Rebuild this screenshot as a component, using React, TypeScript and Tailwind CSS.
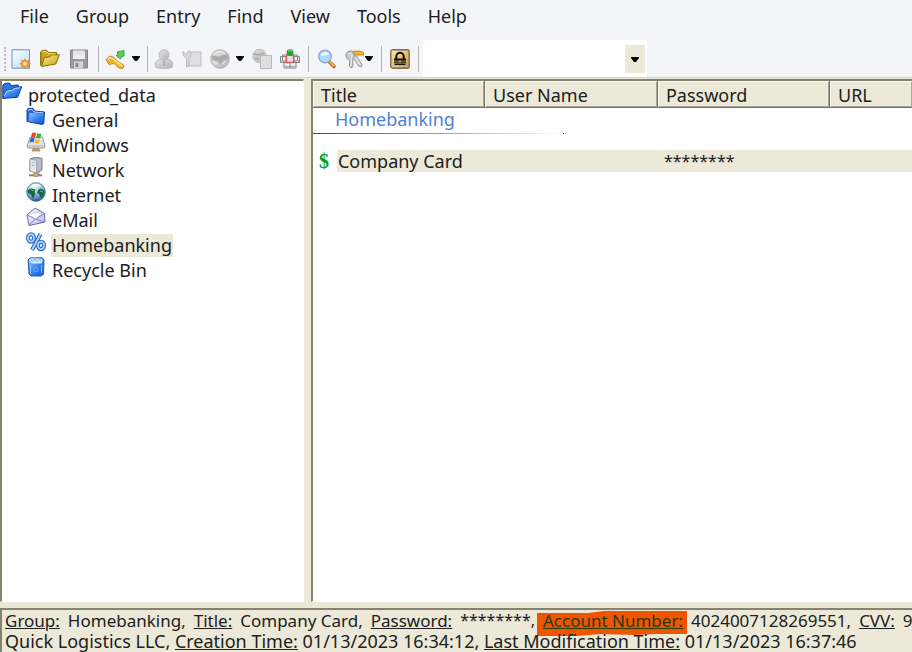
import type { ReactNode } from "react";

const menus = ["File", "Group", "Entry", "Find", "View", "Tools", "Help"];

function Icon({ children }: { children: ReactNode }) {
  return (
    <svg viewBox="0 0 20 20" className="size-5 shrink-0" aria-hidden="true">
      {children}
    </svg>
  );
}

function Gradients() {
  return (
    <svg className="absolute size-0" aria-hidden="true">
      <defs>
        <linearGradient id="paper" x1="0" y1="0" x2="1" y2="1">
          <stop offset="0" stopColor="#fff" />
          <stop offset="1" stopColor="#b9dcf5" />
        </linearGradient>
        <linearGradient id="gold" x1="0" y1="0" x2="1" y2="1">
          <stop offset="0" stopColor="#fff08a" />
          <stop offset="1" stopColor="#c39a14" />
        </linearGradient>
        <linearGradient id="blue" x1="0" y1="0" x2="1" y2="1">
          <stop offset="0" stopColor="#8fc4ff" />
          <stop offset="0.5" stopColor="#3d87f0" />
          <stop offset="1" stopColor="#1253cd" />
        </linearGradient>
        <linearGradient id="grey" x1="0" y1="0" x2="1" y2="1">
          <stop offset="0" stopColor="#e6e6e6" />
          <stop offset="1" stopColor="#b2b2b2" />
        </linearGradient>
        <linearGradient id="lock" x1="0" y1="0" x2="1" y2="1">
          <stop offset="0" stopColor="#fbeab5" />
          <stop offset="1" stopColor="#c99b42" />
        </linearGradient>
        <radialGradient id="globe" cx="0.4" cy="0.2" r="0.9">
          <stop offset="0" stopColor="#f2fbff" />
          <stop offset="0.5" stopColor="#86bce8" />
          <stop offset="1" stopColor="#123a6e" />
        </radialGradient>
        <linearGradient id="mail" x1="0" y1="0" x2="1" y2="1">
          <stop offset="0" stopColor="#fff" />
          <stop offset="1" stopColor="#b4b4ec" />
        </linearGradient>
      </defs>
    </svg>
  );
}

const NewIcon = () => (
  <Icon>
    <path d="M1 .8h17.5v18.4H1z" fill="url(#paper)" stroke="#5f93c4" />
    <path d="m14 9.800 1.300 2.200 2.500-.9-.6 2.400 2.400 1.300-2.400 1.200.7 2.500-2.600-.7-1.300 2.100-1.200-2.200-2.500.8.8-2.500-2.400-1.200 2.400-1.300-.8-2.500 2.500.8z" fill="#ee9838" stroke="#d4792a" strokeWidth=".5" />
    <circle cx="14" cy="14.800" r="2" fill="#ffe58c" />
  </Icon>
);
const OpenIcon = () => (
  <Icon>
    <path d="M.8 16V3l1.500-1.700h4.500L8.500 3.500h8.200V7" fill="#cba51c" stroke="#89700f" />
    <path d="M.8 17V3" stroke="#89700f" />
    <path d="M4.500 8.500 10 7.800l1.500-2h8l-3.800 9.200L1.500 17.500z" fill="url(#gold)" stroke="#89700f" />
    <path d="m2 4 1-1.500h3.300L8 4.700h7.500" fill="none" stroke="#f5df78" />
  </Icon>
);
const SaveIcon = () => (
  <Icon>
    <path d="M1.500 1h17v18h-17z" fill="#9b9b9b" stroke="#858585" />
    <path d="M4 1.500h12V10H4z" fill="#eee" />
    <path d="M4 3h12M4 5h12" stroke="#d9d9d9" />
    <path d="M5 12.500h9V19H5z" fill="#d6d6d6" />
    <path d="M6.500 14h2.800v4H6.500z" fill="#848484" />
  </Icon>
);
const AddEntryIcon = () => (
  <Icon>
    <path d="M1 10.500 4.500 7l4 1 2.500 3 8 5.500-1 3-4-.5-5-4.500-5 1z" fill="#f2b825" stroke="#c27a19" strokeWidth=".8" />
    <path d="m3 10 2.500-1.500L8 10l9.500 7" stroke="#fff0a0" strokeWidth="1.300" fill="none" />
    <circle cx="4.500" cy="11.800" r="1.100" fill="#fff" stroke="#a06012" strokeWidth=".5" />
    <path d="m12 3 7-1.500V7l-2.500.5L15.500 10 11 6.500l2-.5z" fill="#5fce58" stroke="#379b3b" strokeWidth=".9" />
  </Icon>
);
const UserIcon = () => (
  <Icon>
    <path d="M2 18.500c-2-4 0-7.500 4-8.500h8c4 1 6 4.500 4 8.500-4 1.200-12 1.200-16 0z" fill="url(#grey)" stroke="#bcbcbc" />
    <ellipse cx="10" cy="6" rx="5" ry="5.300" fill="url(#grey)" stroke="#bcbcbc" />
    <path d="M10 12v5" stroke="#b0b0b0" strokeWidth="2" />
  </Icon>
);
const CopyPassIcon = () => (
  <Icon>
    <path d="M6 3h13v14H6z" fill="#dedede" stroke="#bdbdbd" />
    <path d="M1 2.500 3 5h2l1.500-3L9 3.500 8.500 8 7 9.500V17l-2.500 1V9.500L1.500 7z" fill="#dadada" stroke="#b5b5b5" strokeWidth=".9" />
  </Icon>
);
const UrlIcon = () => (
  <Icon>
    <circle cx="10" cy="10" r="9.300" fill="url(#grey)" stroke="#b2b2b2" />
    <path d="M2 7c4-1 6 2 9 0s4-1 7-2l1 5c-3 1-4 0-6 2l-3 4-2-4-6-1z" fill="#ababab" />
    <path d="M4 5c3-3 8-3 11 0M3 13l5 2m4 0 4-3" stroke="#eee" fill="none" />
  </Icon>
);
const UrlCopyIcon = () => (
  <Icon>
    <circle cx="7.500" cy="7" r="6.700" fill="url(#grey)" stroke="#bababa" />
    <path d="m2 5 5 1 5-2M3 9l4 1" stroke="#b2b2b2" strokeWidth="2" fill="none" />
    <path d="M8.500 6.500h11v13h-11z" fill="#dfdfdf" stroke="#b9b9b9" />
  </Icon>
);
const AutoTypeIcon = () => (
  <Icon>
    <path d="M2.500 6h15v6h-15zM.5 7.500H6v6H.5zM14 7.500h5.500v6H14zM4 13h12v6H4z" fill="#f0f0f0" stroke="#858585" />
    <path d="M1.500 12h4M15 12h4M5 17.500h10" stroke="#b5b5b5" strokeWidth="1.500" />
    <path d="M6.500 6h7v7.500h-7z" fill="#e9dcdc" stroke="#dd5b59" strokeWidth="1.300" />
    <path d="M10 13v6" stroke="#858585" />
    <circle cx="10" cy="3.600" r="3.400" fill="#24a136" />
    <path d="M8 2.500c1-1.500 3-1 4 0" stroke="#86df83" fill="none" />
  </Icon>
);
const FindIcon = () => (
  <Icon>
    <path d="m12.500 13 4.500 4.500" stroke="#c86814" strokeWidth="3.600" strokeLinecap="round" />
    <path d="m13 13 4 4" stroke="#ffc25d" strokeWidth="1.500" strokeLinecap="round" />
    <circle cx="8" cy="7.500" r="6.300" fill="#a9d9fb" stroke="#8fa9cc" strokeWidth="1.400" />
    <path d="M3.500 7.500C4 3 9 1.500 12 4.500 10 7 7 6 3.500 7.500" fill="#e8f8ff" />
  </Icon>
);
const KeysIcon = () => (
  <Icon>
    <path d="M6 2.500 15 2l3.500 1.500V6H8z" fill="#f4b62e" stroke="#cc841f" />
    <path d="m8 6 3.500 1 1.500 2.500 4 6-.5 2.500-3-1-4-6.500L7 9z" fill="#d2d2d2" stroke="#8b8b8b" strokeWidth=".9" />
    <path d="M1 5.500 3 2.500l4-.5 2.500 3-.5 4-1.500 1.500.5 7-2 1.500-1.500-2V11L1.500 9z" fill="#c9c9c9" stroke="#8b8b8b" strokeWidth=".9" />
    <path d="m3 5 2.500-1L7 6l-1 11M10.500 8.500l4 7" fill="none" stroke="#f2f2f2" />
  </Icon>
);
const LockIcon = () => (
  <Icon>
    <rect x=".8" y=".8" width="18.400" height="18.400" rx="2" fill="url(#lock)" stroke="#7d6d4c" strokeWidth="1.400" />
    <path d="M6.300 10V7.500a3.700 3.700 0 0 1 7.400 0V10" fill="none" stroke="#17130a" strokeWidth="2" />
    <path d="M4 9.500h12v2.300H4zm0 3h12v1.300H4zm.5 2h11V16h-11z" fill="#17130a" />
    <path d="M9.300 11.500h1.400v2H9.300z" fill="#dfba68" />
  </Icon>
);

const OpenFolder = () => (
  <Icon>
    <path d="M.8 16V3.500L2.500 1.500l5-.5 1.800 2.500 7-.5V7" fill="#2d76e6" stroke="#113e9d" />
    <path d="m4 8.500 6.500-1 1.200-2 8-.8-4 10.500L.8 16.500z" fill="url(#blue)" stroke="#113e9d" />
    <path d="m2 14 3-5 6-.8 1-1.700 6-.7" fill="none" stroke="#b9e0ff" />
  </Icon>
);
const Folder = () => (
  <Icon>
    <path d="M1 14.500V3l1.200-1.800 4.800.3L8.500 4l10 1-.7 11.500-1.500 1z" fill="#2a69d6" stroke="#103e9f" />
    <path d="m3.500 6 14.500.6-.7 9.900L3 14.500z" fill="url(#blue)" />
    <path d="M2.200 4 3 2.500h3L8 5l9 .8" fill="none" stroke="#a8d4ff" />
  </Icon>
);
const WindowsIcon = () => (
  <Icon>
    <path d="M4 5.500 16.500 5 19 14l-1 2H2l-1-2z" fill="#e4e4e4" stroke="#909090" strokeWidth=".9" />
    <path d="M1.500 14h17" stroke="#aaa" />
    <path d="M7 16.500h6l1 2.500H6z" stroke="#9a8766" strokeWidth=".7" fill="#d29b43" />
    <path d="M6 1c2-1 2.500-.5 4.200.2L9 5.500c-1.500-.8-2.500-.8-4.200 0z" fill="#e94235" />
    <path d="m11 1.500 4.500.2-1.200 4.300c-1.500.5-2.500.3-4.300-.3z" fill="#3aae44" />
    <path d="M4.500 6.200c1.500-.8 2.500-.7 4.200 0L7.500 10.500c-1-.8-2.500-.7-4 0z" fill="#3068cf" />
    <path d="M9.700 6.700c1.300.7 2.500.7 4.300.2L12.800 11c-1.500.5-2.700.4-4.300-.3z" fill="#efbd2d" />
  </Icon>
);
const NetworkIcon = () => (
  <Icon>
    <path d="m4 2 6-2 6 1.500V13l-5 3-7-2z" fill="#b7bbc9" stroke="#777b89" />
    <path d="m4 2 6.500 1.500V16L4 14z" fill="#e8eaf2" stroke="#9196a4" strokeWidth=".7" />
    <path d="m5.500 5 3.500.8M5.500 8l3.500.8M13 15v3" stroke="#a5aaba" />
    <path d="M3 18.300h13" stroke="#858585" strokeWidth="2" />
    <path d="M8 16.500h4v3H8z" fill="#e2b568" stroke="#96784b" strokeWidth=".6" />
  </Icon>
);
const InternetIcon = () => (
  <Icon>
    <circle cx="10" cy="10" r="9.300" fill="url(#globe)" stroke="#33669e" strokeWidth=".8" />
    <path d="m1.500 8 4-1.500 4 1-1 2.500 1 2-2.500 4.500-2-4L2 11zm10.500 0 2.500-1.500 3.500 2 .5 3-3.500 4.500-2-4-2-1z" fill="#146938" />
    <path d="M4 5c3-4 9-4 12 0-4-2-8 1-12 0" fill="#effaff" />
    <path d="m5 8 3 .5m6 .5 3 1" stroke="#69c080" />
  </Icon>
);
const MailIcon = () => (
  <Icon>
    <path d="M1 8 9 1l9.500 5.500.5 8.500-16 3.500z" fill="url(#mail)" stroke="#6667aa" />
    <path d="m1 8 8.500 4 9-5.500M3 18l6.500-6 9 3" fill="none" stroke="#8586c0" />
    <path d="m4 7 9-2 2 2.500-5.500 4.200L4 8.500" fill="#fff" stroke="#b5b5dc" strokeWidth=".6" />
  </Icon>
);
const PercentIcon = () => (
  <Icon>
    <g fill="none" stroke="#2d64be" strokeWidth="4">
      <ellipse cx="5" cy="6" rx="3" ry="3.800" />
      <ellipse cx="15" cy="13.500" rx="3" ry="3.800" />
      <path d="M14.500 2 6 18" />
    </g>
    <g fill="none" stroke="#a2d0ff" strokeWidth="2">
      <ellipse cx="5" cy="6" rx="3" ry="3.800" />
      <ellipse cx="15" cy="13.500" rx="3" ry="3.800" />
      <path d="M14.500 2 6 18" />
    </g>
  </Icon>
);
const BinIcon = () => (
  <Icon>
    <path d="m2 3 2-2 12-.3 2 2.300-.5 14-2 2H5l-2-2z" fill="url(#blue)" stroke="#1b5cb8" />
    <path d="m3 3 2-1.500h10L17 3l-1.500 3.500h-10z" fill="#d2e7f7" />
    <path d="m5 3 2 1.500L9 2l2 2.500L14 2l1 2" fill="none" stroke="#82b0d6" />
    <path d="M4.500 8v9M15.500 8v8" stroke="#8bc5ff" />
    <path d="m8 11.500 2-1 2 1v2.500l-2 1-2-1z" fill="none" stroke="#66a8f4" />
  </Icon>
);
const DollarIcon = () => (
  <span aria-hidden="true" className="font-['Liberation_Serif',serif] text-[20px] leading-5 font-bold text-[#079c13]">$</span>
);

function Arrow() {
  return (
    <svg viewBox="0 0 8 5" className="h-[5px] w-2" aria-hidden="true">
      <path d="M0 0h8v1L5 5H3L0 1z" fill="#000" />
    </svg>
  );
}

function Tool({ label, disabled, children }: { label: string; disabled?: boolean; children: ReactNode }) {
  return (
    <button type="button" aria-label={label} disabled={disabled} className="flex size-5 shrink-0">
      {children}
    </button>
  );
}

function DropArrow({ label }: { label: string }) {
  return (
    <button type="button" aria-label={label} className="flex h-5 w-2 shrink-0 items-center justify-center">
      <Arrow />
    </button>
  );
}

const Separator = () => <div className="h-[26px] w-px shrink-0 bg-[#b3b3b1]" />;

const folders = [
  { name: "General", icon: <Folder /> },
  { name: "Windows", icon: <WindowsIcon /> },
  { name: "Network", icon: <NetworkIcon /> },
  { name: "Internet", icon: <InternetIcon /> },
  { name: "eMail", icon: <MailIcon /> },
  { name: "Homebanking", icon: <PercentIcon />, selected: true },
  { name: "Recycle Bin", icon: <BinIcon /> },
];

const Label = ({ children }: { children: ReactNode }) => <u className="underline-offset-1">{children}</u>;

export default function App() {
  return (
    <div className="flex min-h-screen flex-col overflow-hidden bg-[#ece9d8] font-['Noto_Sans',sans-serif] text-[18px] leading-[22px] text-[#202020]">
      <Gradients />
      <header className="bg-[#f4f5f8]">
        <nav aria-label="Main menu" className="flex h-10 gap-[27px] px-5 pt-[5px]">
          {menus.map((menu) => (
            <button type="button" key={menu} className="h-[22px]">
              {menu}
            </button>
          ))}
        </nav>
        <div role="toolbar" aria-label="Toolbar" className="flex h-[38px] items-center border-b border-[#d5d4cc] pl-1">
          <div className="h-6 shrink-0 border-l-2 border-dotted border-[#bcbec2]" />
          <div className="ml-[5px] flex items-center gap-[9px]">
            <Tool label="New"><NewIcon /></Tool>
            <Tool label="Open"><OpenIcon /></Tool>
            <Tool label="Save" disabled><SaveIcon /></Tool>
            <Separator />
          </div>
          <div className="ml-1.5 flex items-center gap-[7px]">
            <Tool label="Add entry"><AddEntryIcon /></Tool>
            <DropArrow label="Add entry options" />
            <Separator />
          </div>
          <div className="ml-1.5 flex items-center gap-2">
            <Tool label="Copy user name" disabled><UserIcon /></Tool>
            <Tool label="Copy password" disabled><CopyPassIcon /></Tool>
            <div className="flex items-center gap-1.5">
              <Tool label="Open URL" disabled><UrlIcon /></Tool>
              <DropArrow label="URL options" />
            </div>
            <Tool label="Copy URL" disabled><UrlCopyIcon /></Tool>
            <Tool label="Auto-type"><AutoTypeIcon /></Tool>
            <Separator />
            <Tool label="Find"><FindIcon /></Tool>
            <div className="flex items-center">
              <Tool label="Show entries"><KeysIcon /></Tool>
              <DropArrow label="Show entries options" />
            </div>
            <Separator />
            <Tool label="Lock workspace"><LockIcon /></Tool>
            <Separator />
          </div>
          <div className="relative ml-1 h-[37px] w-56 shrink-0 bg-white py-[5px] pr-[2px]">
            <select aria-label="Quick search" className="h-full w-full appearance-none bg-white px-2 outline-none">
              <option> </option>
            </select>
            <span className="pointer-events-none absolute top-[5px] right-[2px] flex h-7 w-5 items-center justify-center bg-[#ece9d8]">
              <Arrow />
            </span>
          </div>
        </div>
      </header>

      <main className="flex flex-1 pt-px">
        <section aria-label="Groups" className="w-1/3 shrink-0 border-t-2 border-r border-b border-l-2 border-[#85826f] border-r-white border-b-white bg-white">
          <button type="button" className="flex h-[25px] w-full items-center gap-1.5">
            <span className="mb-1"><OpenFolder /></span>
            <span className="mt-0.5">protected_data</span>
          </button>
          <ul>
            {folders.map((f) => (
              <li key={f.name} className="h-[25px]">
                <button type="button" className="flex h-full items-center gap-[5px] pl-6">
                  <span className="mb-1">{f.icon}</span>
                  <span className={`mt-1 h-[23px] px-px ${f.selected ? "bg-[#ece9d8]" : ""}`}>{f.name}</span>
                </button>
              </li>
            ))}
          </ul>
        </section>
        <section aria-label="Entries" className="ml-[7px] min-w-0 flex-1 overflow-hidden border-t-2 border-b border-l-2 border-[#85826f] border-b-white bg-white">
          <table className="w-full table-fixed border-separate border-spacing-0 text-left">
            <colgroup>
              <col className="w-[172px]" />
              <col className="w-[173px]" />
              <col className="w-[172px]" />
              <col />
            </colgroup>
            <thead>
              <tr className="h-[27px] bg-[#ece9d8]">
                {["Title", "User Name", "Password", "URL"].map((h) => (
                  <th
                    key={h}
                    scope="col"
                    className="border-r border-b border-[#716f64] p-0 pt-0.5 pl-2 font-normal shadow-[inset_1px_1px_0_#fbfaf3,inset_-1px_-1px_0_#aca899] last:border-r-0"
                  >
                    {h}
                  </th>
                ))}
              </tr>
            </thead>
            <tbody>
              <tr>
                <th colSpan={4} scope="rowgroup" className="p-0 font-normal text-[#4f7fd5]">
                  <div className="h-[25px] pl-[22px]">Homebanking</div>
                  <div className="flex">
                    <div className="h-px w-[250px] bg-linear-to-r from-[#0f52a0] via-[#7fa5ce] to-white" />
                    <div className="size-px bg-[#16345c]" />
                  </div>
                  <div className="h-4" />
                </th>
              </tr>
              <tr className="h-[22px]">
                <td className="p-0">
                  <div className="flex h-[22px]">
                    <span className="w-6 shrink-0 pl-1.5"><DollarIcon /></span>
                    <span className="flex-1 bg-[#ece9d8] pl-px">Company Card</span>
                  </div>
                </td>
                <td className="bg-[#ece9d8] p-0" />
                <td className="bg-[#ece9d8] p-0 pl-1.5 text-[16px]">********</td>
                <td className="bg-[#ece9d8] p-0" />
              </tr>
            </tbody>
          </table>
        </section>
      </main>

      <footer className="mt-[6px] overflow-hidden border-t-2 border-l-2 border-[#85826f] pl-[3px] leading-[21px] whitespace-nowrap">
        <p className="flex gap-2 text-[17px]">
          <Label>Group:</Label>
          <span>Homebanking,</span>
          <Label>Title:</Label>
          <span>Company Card,</span>
          <Label>Password:</Label>
          <span className="text-[16px]">********,</span>
          <span className="relative text-[#2a3900]">
            <svg viewBox="0 0 151 26" preserveAspectRatio="none" className="absolute top-0 -left-1.5 h-[26px] w-[calc(100%+10px)]" aria-hidden="true">
              <path d="M0 3h51l17-2h83v23h-32l-20 1-35-1-24 2H0z" fill="#ed5500" />
            </svg>
            <span className="relative"><Label>Account Number:</Label></span>
          </span>
          <span>4024007128269551,</span>
          <Label>CVV:</Label>
          <span>9</span>
        </p>
        <p className="relative">
          Quick Logistics LLC, <Label>Creation Time:</Label> 01/13/2023 16:34:12, <Label>Last Modification Time:</Label> 01/13/2023 16:37:46
        </p>
      </footer>
    </div>
  );
}
